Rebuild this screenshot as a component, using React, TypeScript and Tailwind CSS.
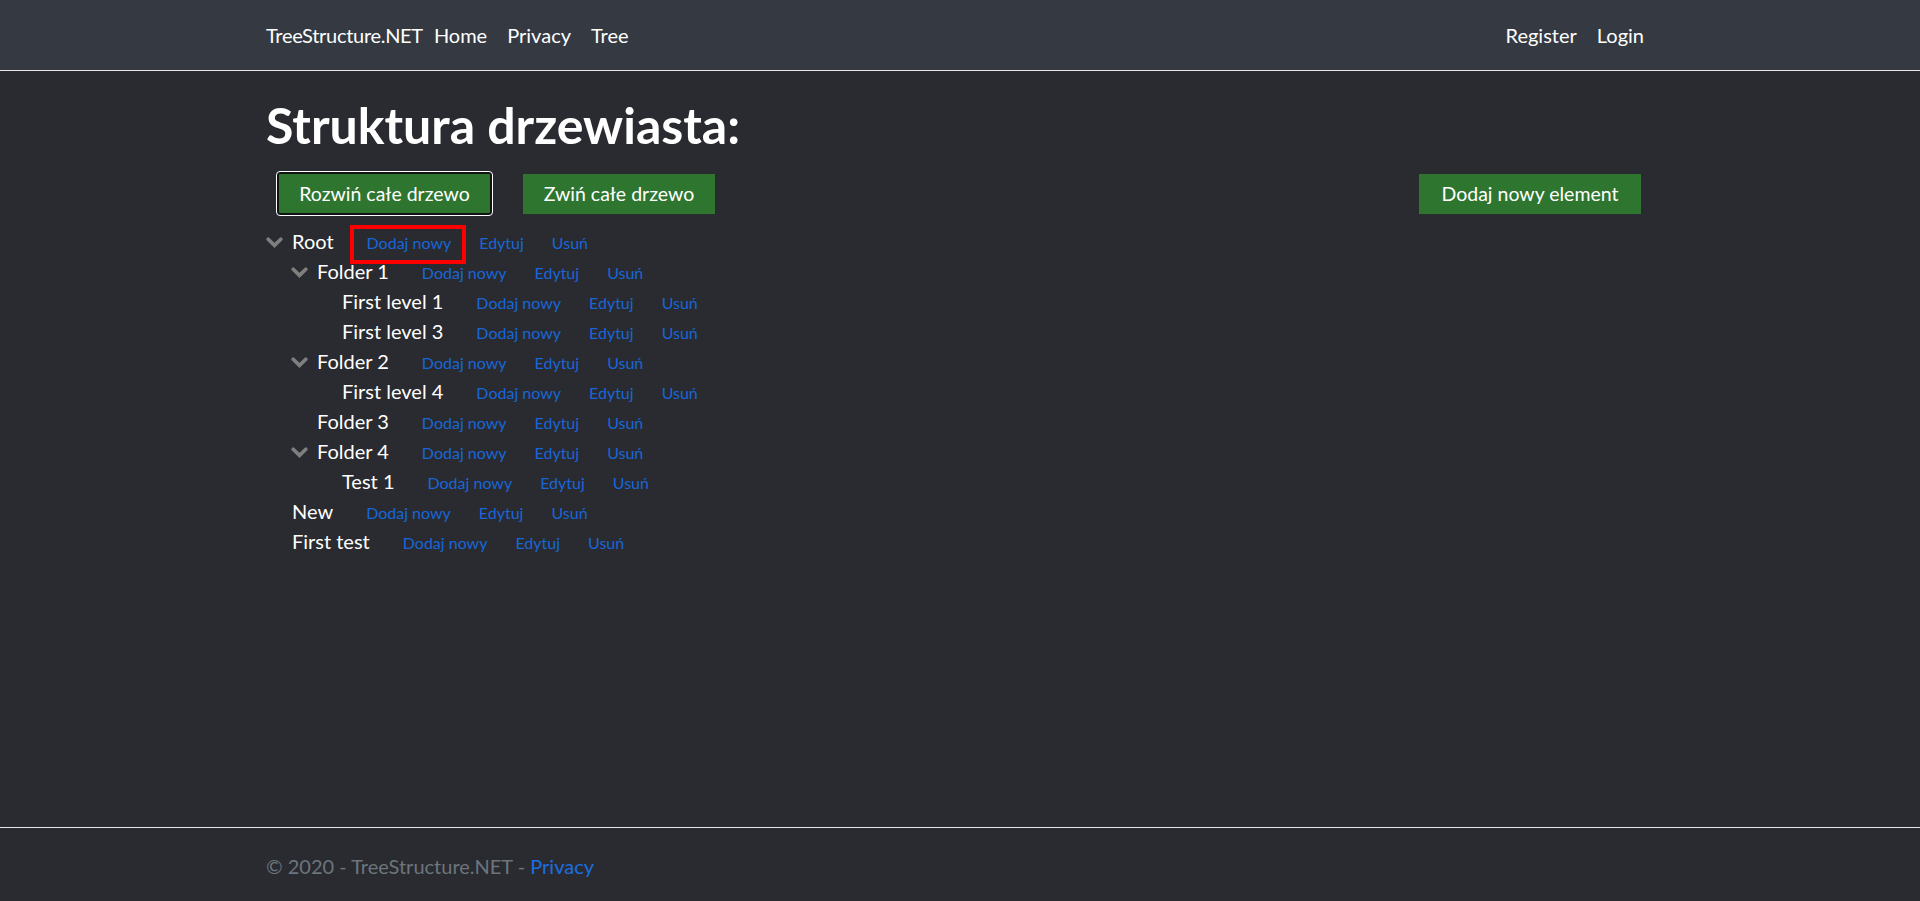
import React from "react";

type Node = { name: string; level: 0 | 1 | 2; chev: boolean; boxed?: boolean };

const nodes: Node[] = [
  { name: "Root", level: 0, chev: true, boxed: true },
  { name: "Folder 1", level: 1, chev: true },
  { name: "First level 1", level: 2, chev: false },
  { name: "First level 3", level: 2, chev: false },
  { name: "Folder 2", level: 1, chev: true },
  { name: "First level 4", level: 2, chev: false },
  { name: "Folder 3", level: 1, chev: false },
  { name: "Folder 4", level: 1, chev: true },
  { name: "Test 1", level: 2, chev: false },
  { name: "New", level: 0, chev: false },
  { name: "First test", level: 0, chev: false },
];

const indent: Record<number, string> = {
  0: "pl-0",
  1: "pl-[25px]",
  2: "pl-[50px]",
};

function Chevron() {
  return (
    <svg width="17" height="11" viewBox="0 0 17 11" className="block">
      <polyline
        points="2.2,2.2 8.5,8.4 14.8,2.2"
        fill="none"
        stroke="#7f7f7f"
        strokeWidth="3.6"
        strokeLinecap="round"
        strokeLinejoin="miter"
      />
    </svg>
  );
}

export default function App() {
  return (
    <div
      className="min-h-screen flex flex-col bg-[#2a2b30] text-white"
      style={{ fontFamily: 'Lato, "Open Sans", "Noto Sans", sans-serif' }}
    >
      <header className="h-[71px] shrink-0 bg-[#353a42] border-b border-[#e6e6e6]">
        <div className="mx-auto w-[1388px] h-full flex items-center justify-between text-[20px]">
          <nav className="flex items-center">
            <a className="text-white mr-[1px] tracking-[-0.3px]">TreeStructure.NET</a>
            <a className="text-white px-[10px]">Home</a>
            <a className="text-white px-[10px]">Privacy</a>
            <a className="text-white px-[10px]">Tree</a>
          </nav>
          <nav className="flex items-center">
            <a className="text-white px-[10px]">Register</a>
            <a className="text-white px-[10px]">Login</a>
          </nav>
        </div>
      </header>

      <main className="flex-1">
        <div className="mx-auto w-[1388px]">
          <h1 className="mt-[24px] text-[50px] leading-[60px] font-bold text-white">
            Struktura drzewiasta:
          </h1>

          <div className="mt-[17px] flex items-center">
            <button className="ml-[11px] w-[215px] h-[43px] flex items-center justify-center bg-[#2e7530] text-white text-[19.5px] border-2 border-[#111214] outline outline-1 outline-white rounded-[3px]">
              Rozwiń całe drzewo
            </button>
            <button className="ml-[31px] w-[192px] h-[40px] flex items-center justify-center bg-[#2e7530] text-white text-[19.5px]">
              Zwiń całe drzewo
            </button>
            <div className="flex-1" />
            <button className="mr-[13px] w-[222px] h-[40px] flex items-center justify-center bg-[#2e7530] text-white text-[19.5px]">
              Dodaj nowy element
            </button>
          </div>

          <div className="mt-[12px]">
            {nodes.map((n, i) => (
              <div key={i} className={`flex items-center h-[30px] ${indent[n.level]}`}>
                <span className="w-[26px] shrink-0 flex items-center">
                  {n.chev ? <Chevron /> : null}
                </span>
                <div className="flex items-baseline leading-[30px]">
                  <span className="text-[20px] text-white">{n.name}</span>
                  <div className="ml-[20px] flex items-baseline gap-[2px] text-[16px] text-[#1766d8]">
                    <a className="relative inline-block px-[13px]">
                      Dodaj nowy
                      {n.boxed ? (
                        <span className="absolute -left-[4px] -right-[2px] -top-[3px] -bottom-[6px] border-4 border-[#ff0000]" />
                      ) : null}
                    </a>
                    <a className="inline-block px-[13px]">Edytuj</a>
                    <a className="inline-block px-[13px]">Usuń</a>
                  </div>
                </div>
              </div>
            ))}
          </div>
        </div>
      </main>

      <footer className="h-[74px] shrink-0 border-t border-[#e6e6e6]">
        <div className="mx-auto w-[1388px] pt-[2px] leading-[73px] text-[20px] text-[#6c757d]">
          © 2020 - TreeStructure.NET - <a className="text-[#1b6ee0]">Privacy</a>
        </div>
      </footer>
    </div>
  );
}
